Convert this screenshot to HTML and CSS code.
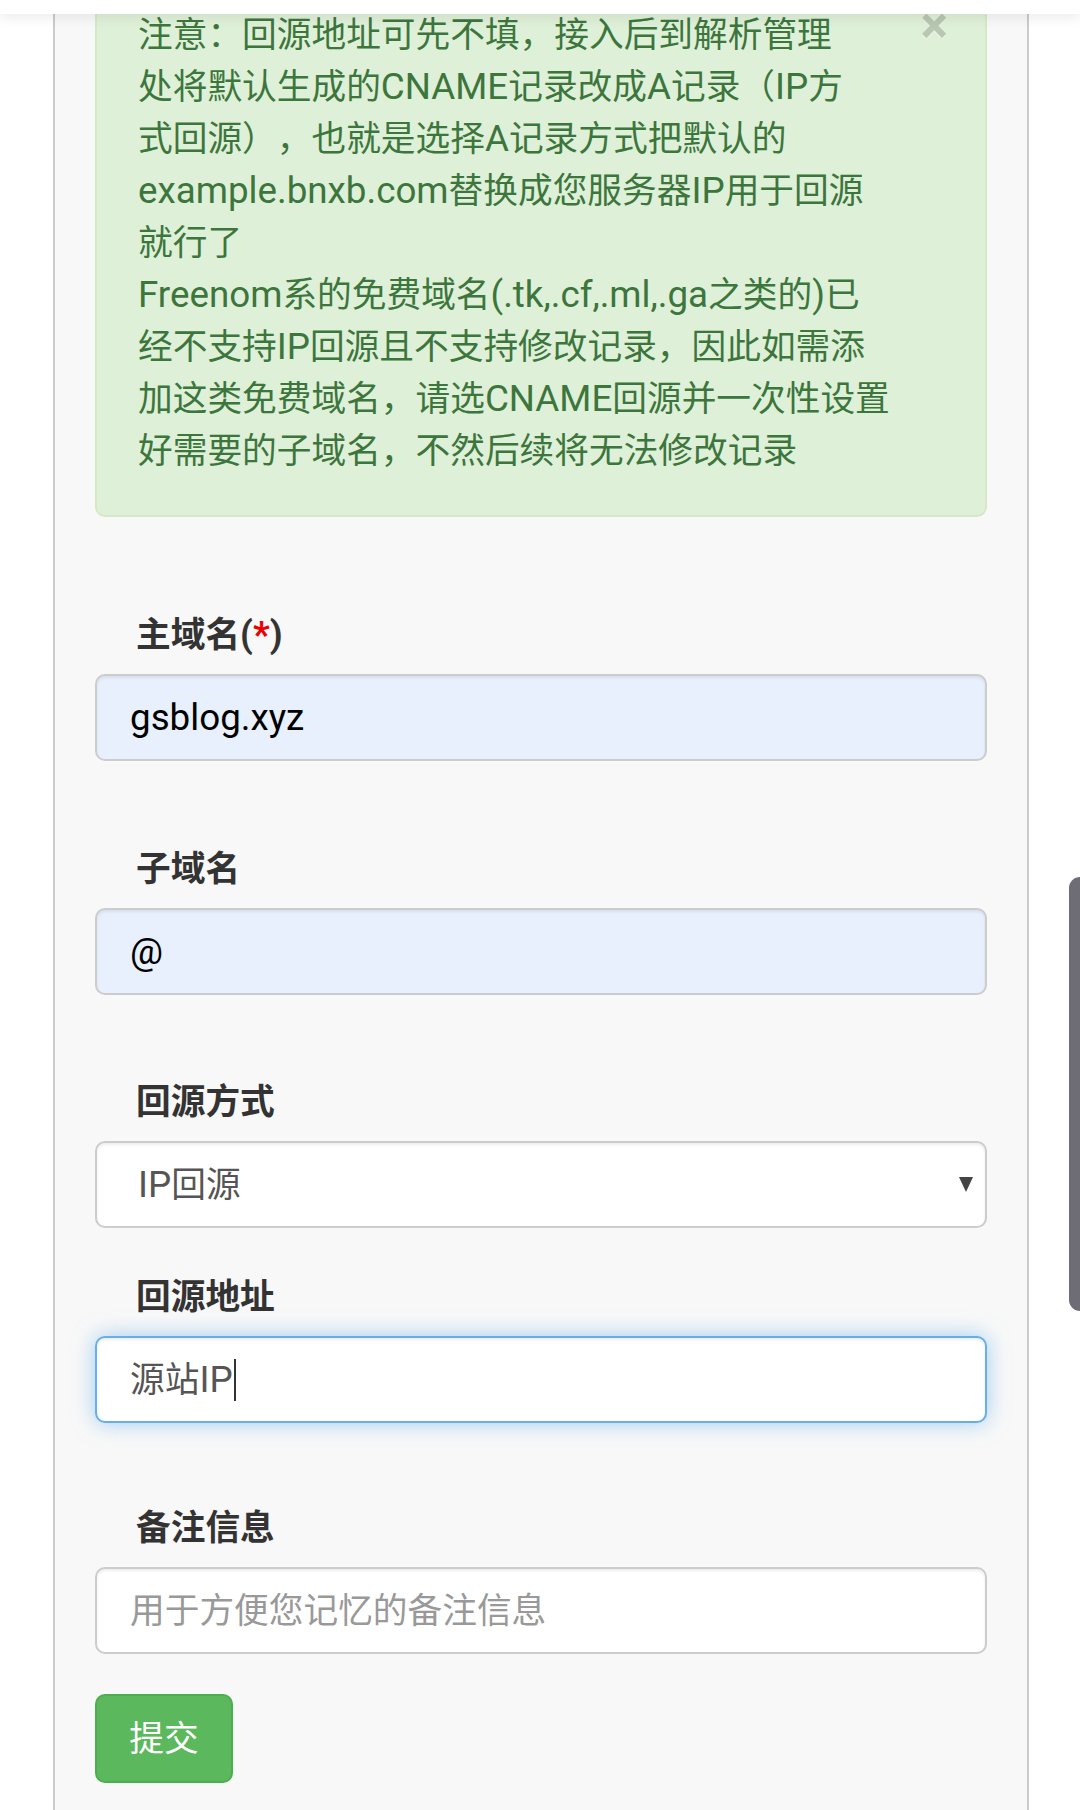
FILE: index.html
```html
<!DOCTYPE html>
<html lang="zh-CN">
<head>
<meta charset="utf-8">
<title>添加域名</title>
<link rel="stylesheet" href="styles.css">
</head>
<body>
<div class="topbar"></div>
<div class="scroll-handle"></div>
<main class="panel">
  <div class="alert">
    <button class="close" type="button">×</button>
    <p>注意：回源地址可先不填，接入后到解析管理<br>处将默认生成的<span class="lt">CNAME</span>记录改成<span class="lt">A</span>记录（<span class="lt">IP</span>方<br>式回源），也就是选择<span class="lt">A</span>记录方式把默认的<br><span class="lt">example.bnxb.com</span>替换成您服务器<span class="lt">IP</span>用于回源<br>就行了<br><span class="lt">Freenom</span>系的免费域名<span class="lt">(.tk,.cf,.ml,.ga</span>之类的<span class="lt">)</span>已<br>经不支持<span class="lt">IP</span>回源且不支持修改记录，因此如需添<br>加这类免费域名，请选<span class="lt">CNAME</span>回源并一次性设置<br>好需要的子域名，不然后续将无法修改记录</p>
  </div>
  <form class="form">
    <div class="group g1">
      <label class="label">主域名<span class="lt">(</span><span class="req lt">*</span><span class="lt">)</span></label>
      <input class="control autofill latin" type="text" value="gsblog.xyz">
    </div>
    <div class="group g2">
      <label class="label">子域名</label>
      <input class="control autofill latin" type="text" value="@">
    </div>
    <div class="group g3">
      <label class="label">回源方式</label>
      <div class="control select">
        <span><span class="lt">IP</span>回源</span>
        <svg class="arrow" width="14" height="15" viewBox="0 0 14 15"><polygon points="0,0 14,0 7,15" fill="#444"/></svg>
      </div>
    </div>
    <div class="group g4">
      <label class="label">回源地址</label>
      <div class="control focus"><span>源站<span class="lt">IP</span></span><span class="caret"></span></div>
    </div>
    <div class="group g5">
      <label class="label">备注信息</label>
      <input class="control" type="text" placeholder="用于方便您记忆的备注信息">
    </div>
    <button class="btn" type="button">提交</button>
  </form>
</main>
</body>
</html>
```
FILE: styles.css
```css
* { box-sizing: border-box; }
html, body { margin: 0; background: #fff; }
body {
  font-family: Roboto, "Noto Sans CJK SC", sans-serif;
  font-size: 34.7px;
  line-height: 52px;
  color: #333;
  overflow: hidden;
  height: 1810px;
  text-spacing-trim: space-all;
}
.lt { font-size: 36.75px; line-height: 0; }
.topbar {
  position: fixed;
  top: 0; left: 0; right: 0;
  height: 14px;
  background: #fff;
  box-shadow: 0 3px 14px rgba(0,0,0,.09);
  z-index: 10;
}
.scroll-handle {
  position: fixed;
  right: 0;
  top: 877px;
  width: 11px;
  height: 434px;
  background: #6e6d75;
  border-radius: 22px 0 0 22px;
  z-index: 10;
}
.panel {
  margin: -34px 51px 0 53px;
  background: #f8f8f8;
  border-left: 2px solid #cbcbcb;
  border-right: 2px solid #cbcbcb;
  padding: 0 40px;
  min-height: 1900px;
}
.alert {
  position: relative;
  background: #dff0d8;
  border: 2px solid #d6e9c6;
  border-radius: 10px;
  color: #3c763d;
  padding: 41px 90px 38px 41px;
}
.alert p { margin: 0; white-space: nowrap; }
.close {
  position: absolute;
  top: 32px;
  right: 37px;
  background: none;
  border: 0;
  padding: 0;
  font: 700 52px/1 Roboto, sans-serif;
  color: #000;
  opacity: .17;
  text-shadow: 0 2px 0 #fff;
}
.form { display: flex; flex-direction: column; align-items: stretch; }
.group { display: flex; flex-direction: column; }
.g1 { margin-top: 90px; }
.g2 { margin-top: 80px; }
.g3 { margin-top: 79px; }
.g4 { margin-top: 41px; }
.g5 { margin-top: 77px; }
.label {
  display: block;
  font-weight: 700;
  color: #333;
  padding-top: 2px;
  margin: 0 0 13px 41px;
}
.req { color: #e00; }
.control {
  display: flex;
  align-items: center;
  width: 100%;
  height: 87px;
  margin: 0;
  border: 2px solid #ccc;
  border-radius: 10px;
  background: #fff;
  padding: 0 33px;
  font: 34.7px/52px Roboto, "Noto Sans CJK SC", sans-serif;
  color: #555;
  box-shadow: inset 0 2px 3px rgba(0,0,0,.075);
  outline: none;
}
.control::placeholder { color: #999; opacity: 1; }
.autofill { background: #e8f0fe; color: #000; }
.latin { font-size: 36.75px; }
.select {
  justify-content: space-between;
  padding: 0 12px 0 41px;
}
.arrow { display: block; }
.focus {
  border-color: #66afe9;
  box-shadow: inset 0 2px 3px rgba(0,0,0,.075), 0 0 21px rgba(102,175,233,.6);
}
.caret {
  display: inline-block;
  width: 2px;
  height: 42px;
  background: #333;
  margin-left: 1px;
}
.btn {
  margin-top: 40px;
  align-self: flex-start;
  width: 138px;
  height: 89px;
  background: #5cb85c;
  border: 2px solid #4cae4c;
  border-radius: 10px;
  color: #fff;
  font: 34.7px/52px Roboto, "Noto Sans CJK SC", sans-serif;
  padding: 0;
  text-align: center;
}
```
